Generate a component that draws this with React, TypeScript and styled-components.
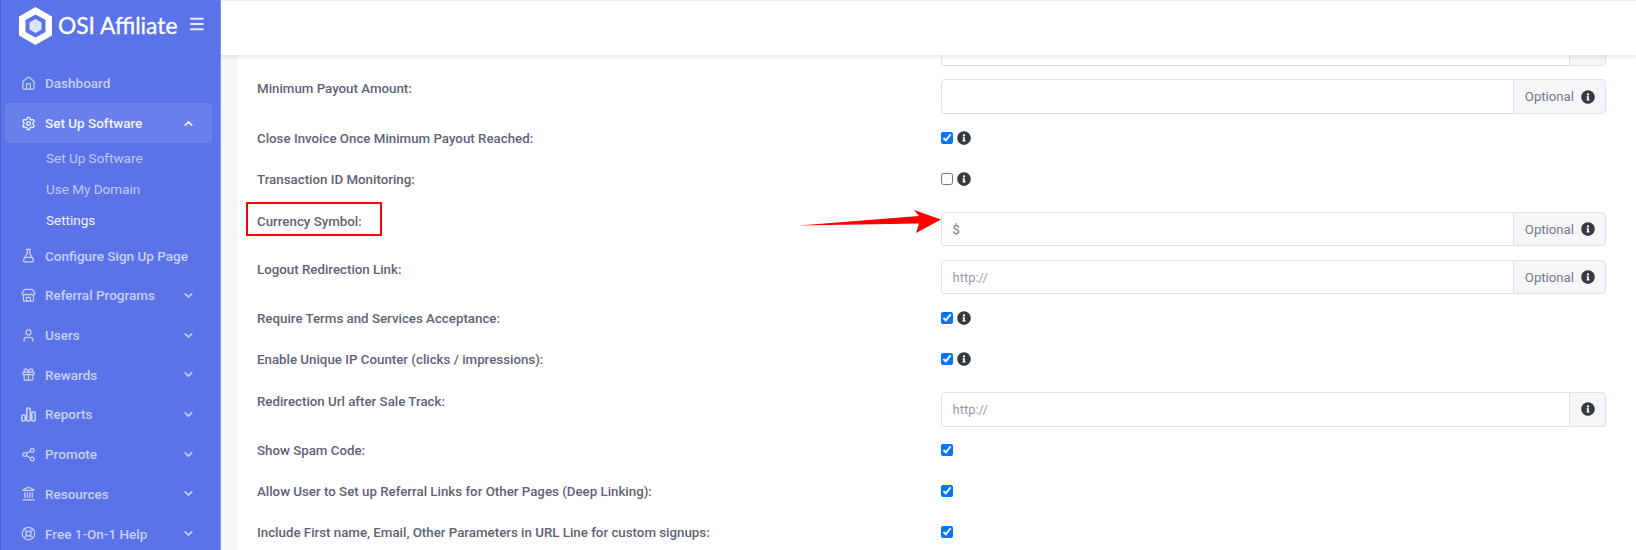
import React from "react";
import styled, { createGlobalStyle } from "styled-components";
import {
  House, Settings, FlaskConical, Store, User, Gift, Share2, Landmark, LifeBuoy, ChevronDown, ChevronUp, Menu,
} from "lucide-react";
import { FaInfoCircle } from "react-icons/fa";

const FONT = `"Roboto", "Liberation Sans", sans-serif`;

const Global = createGlobalStyle`
  html, body { margin: 0; padding: 0; height: 550px; overflow: hidden; background: #fff; }
  * { box-sizing: border-box; }
  #root { height: 550px; }
`;

const Page = styled.div`
  display: flex;
  width: 1636px;
  height: 550px;
  font-family: ${FONT};
  font-size: 13.5px;
  background: #f5f6f8;
  overflow: hidden;
`;

const Sidebar = styled.aside`
  flex: 0 0 221px;
  display: flex;
  flex-direction: column;
  overflow: hidden;
  background: #5a73e8;
  border-left: 1px solid #4c62c8;
  border-right: 1px solid #8597ee;
`;

const Brand = styled.div`
  flex: none;
  height: 63.5px;
  display: flex;
  align-items: flex-start;
  padding: 7px 0 0 17px;
  color: #fff;
`;

const BrandName = styled.span`
  font-family: "Lato", sans-serif;
  font-size: 22.8px;
  line-height: 37px;
  margin-left: 5px;
  width: 133px;
  white-space: nowrap;
  -webkit-text-stroke: 0.3px #fff;
`;

const Burger = styled.span`
  display: flex;
  margin: 8px 0 0 -3px;
  color: #e3e8fc;
`;

const Nav = styled.nav`
  flex: none;
  display: flex;
  flex-direction: column;
`;

const NavItem = styled.div<{ $active?: boolean }>`
  flex: none;
  height: 39.7px;
  margin-left: ${(p) => (p.$active ? "3.5px" : "0")};
  margin-right: ${(p) => (p.$active ? "8.5px" : "0")};
  padding-left: ${(p) => (p.$active ? "16.5px" : "20px")};
  padding-right: ${(p) => (p.$active ? "17px" : "25.5px")};
  display: flex;
  align-items: center;
  gap: 9px;
  border-radius: 3px;
  font-weight: 500;
  color: ${(p) => (p.$active ? "#f3f5fe" : "#c7d0f8")};
  background: ${(p) => (p.$active ? "#6980ea" : "transparent")};
`;

const NavIcon = styled.span`
  display: flex;
  width: 15px;
  justify-content: center;
`;

const NavText = styled.span`
  flex: 1;
  white-space: nowrap;
`;

const SubNav = styled.div`
  display: flex;
  flex-direction: column;
`;

const SubItem = styled.div<{ $active?: boolean }>`
  height: 31px;
  line-height: 31px;
  padding-left: 45px;
  font-size: 13.5px;
  color: ${(p) => (p.$active ? "#f3f5fe" : "#c0caf6")};
`;

const Main = styled.main`
  flex: 1;
  display: flex;
  flex-direction: column;
  min-width: 0;
`;

const Topbar = styled.header`
  flex: 0 0 55px;
  position: relative;
  z-index: 2;
  background: #fff;
  border-top: 1px solid #ececec;
  box-shadow: 0 2px 4px rgba(15, 34, 58, 0.1);
`;

const Content = styled.div`
  flex: 1;
  min-height: 0;
  overflow: hidden;
  padding-left: 17px;
`;

const Card = styled.section`
  height: 100%;
  background: #fff;
  padding: 0 30px 0 19px;
  overflow: hidden;
`;

const Form = styled.div`
  margin-top: -23.7px;
  display: flex;
  flex-direction: column;
  gap: 13.4px;
`;

const Row = styled.div<{ $check?: boolean; $extra?: number }>`
  flex: none;
  position: relative;
  display: grid;
  grid-template-columns: 683.5px 1fr;
  height: ${(p) => (p.$check ? "27.6px" : "34.6px")};
  margin-top: ${(p) => p.$extra ?? 0}px;
`;

const Label = styled.label<{ $check?: boolean }>`
  padding-top: ${(p) => (p.$check ? "1.2px" : "0")};
  line-height: 19.5px;
  font-size: 13.3px;
  font-weight: 500;
  color: #5f6377;
  white-space: nowrap;
`;

const InputGroup = styled.div`
  display: flex;
  height: 34.6px;
`;

const TextInput = styled.input`
  flex: 1;
  min-width: 0;
  height: 100%;
  padding: 0 11px;
  border: 1px solid #dfe1e9;
  border-radius: 4px 0 0 4px;
  background: #fff;
  font-family: ${FONT};
  font-size: 13px;
  color: #74788d;
  outline: none;
  &::placeholder { color: #969aaa; opacity: 1; }
`;

const Addon = styled.span`
  display: flex;
  align-items: center;
  justify-content: center;
  gap: 7px;
  min-width: 37px;
  height: 100%;
  padding: 0 10px 0 11px;
  margin-left: -1px;
  border: 1px solid #dfe1e9;
  border-radius: 0 4px 4px 0;
  background: #f5f6f8;
  font-size: 13.2px;
  color: #74788d;
`;

const CheckLine = styled.div`
  display: flex;
  align-items: center;
  gap: 4px;
  height: 20px;
`;

const Check = styled.input.attrs({ type: "checkbox" })`
  width: 12px;
  height: 12px;
  margin: 0;
`;

const Info = styled(FaInfoCircle)`
  color: #343a40;
  font-size: 14px;
  flex: none;
`;

const RedBox = styled.span`
  position: absolute;
  left: -11px;
  top: -9.7px;
  width: 136px;
  height: 33.7px;
  border: 2px solid #f00;
`;

const Arrow = styled.svg`
  position: absolute;
  left: 542px;
  top: -3px;
  width: 142px;
  height: 26px;
`;

const Logo = () => (
  <svg width="35" height="38" viewBox="0 0 35 38">
    <polygon points="17.5,0 34,9.5 34,28.5 17.5,38 1,28.5 1,9.5" fill="#fff" />
    <polygon points="17.5,7.5 27.5,13 27.5,25 17.5,30.5 7.5,25 7.5,13" fill="#5a73e8" />
    <polygon points="17.5,12 23.5,15.5 23.5,22.5 17.5,26 11.5,22.5 11.5,15.5" fill="#dfe4fb" />
  </svg>
);

const Bars = () => (
  <svg width="15" height="15" viewBox="0 0 15 15" fill="none" stroke="currentColor" strokeWidth="1.6">
    <rect x="0.8" y="8" width="3.4" height="6" rx="1" />
    <rect x="5.8" y="1" width="3.4" height="13" rx="1" />
    <rect x="10.8" y="5" width="3.4" height="9" rx="1" />
  </svg>
);

const iconProps = { size: 15, strokeWidth: 2 };

const items: { label: string; icon: React.ReactNode }[] = [
  { label: "Referral Programs", icon: <Store {...iconProps} /> },
  { label: "Users", icon: <User {...iconProps} /> },
  { label: "Rewards", icon: <Gift {...iconProps} /> },
  { label: "Reports", icon: <Bars /> },
  { label: "Promote", icon: <Share2 {...iconProps} /> },
  { label: "Resources", icon: <Landmark {...iconProps} /> },
  { label: "Free 1-On-1 Help", icon: <LifeBuoy {...iconProps} /> },
];

const OptionalAddon = () => (
  <Addon>
    Optional <Info />
  </Addon>
);

const CheckRow = ({ label, checked, info, extra }: { label: string; checked?: boolean; info?: boolean; extra?: number }) => (
  <Row $check $extra={extra}>
    <Label $check>{label}</Label>
    <CheckLine>
      <Check defaultChecked={checked} />
      {info && <Info />}
    </CheckLine>
  </Row>
);

export default function App() {
  return (
    <Page>
      <Global />
      <Sidebar>
        <Brand>
          <Logo />
          <BrandName>OSI Affiliate</BrandName>
          <Burger>
            <Menu size={18} strokeWidth={2.4} />
          </Burger>
        </Brand>
        <Nav>
          <NavItem>
            <NavIcon><House {...iconProps} /></NavIcon>
            <NavText>Dashboard</NavText>
          </NavItem>
          <NavItem $active>
            <NavIcon><Settings {...iconProps} /></NavIcon>
            <NavText>Set Up Software</NavText>
            <ChevronUp size={13} strokeWidth={2.8} />
          </NavItem>
          <SubNav>
            <SubItem>Set Up Software</SubItem>
            <SubItem>Use My Domain</SubItem>
            <SubItem $active>Settings</SubItem>
          </SubNav>
          <NavItem>
            <NavIcon><FlaskConical {...iconProps} /></NavIcon>
            <NavText>Configure Sign Up Page</NavText>
          </NavItem>
          {items.map((it) => (
            <NavItem key={it.label}>
              <NavIcon>{it.icon}</NavIcon>
              <NavText>{it.label}</NavText>
              <ChevronDown size={13} strokeWidth={2.8} />
            </NavItem>
          ))}
        </Nav>
      </Sidebar>
      <Main>
        <Topbar />
        <Content>
          <Card>
            <Form>
              <Row>
                <span />
                <InputGroup>
                  <TextInput />
                  <Addon />
                </InputGroup>
              </Row>
              <Row>
                <Label>Minimum Payout Amount:</Label>
                <InputGroup>
                  <TextInput />
                  <OptionalAddon />
                </InputGroup>
              </Row>
              <CheckRow label="Close Invoice Once Minimum Payout Reached:" checked info extra={0.7} />
              <CheckRow label="Transaction ID Monitoring:" info />
              <Row $extra={1.8}>
                <Label>Currency Symbol:</Label>
                <InputGroup>
                  <TextInput defaultValue="$" />
                  <OptionalAddon />
                </InputGroup>
                <RedBox />
                <Arrow viewBox="0 0 142 26">
                  <polygon points="0,16.5 120,7 115,1 142,10.5 117,24 120,14.5" fill="#f00" />
                </Arrow>
              </Row>
              <Row>
                <Label>Logout Redirection Link:</Label>
                <InputGroup>
                  <TextInput placeholder="http://" />
                  <OptionalAddon />
                </InputGroup>
              </Row>
              <CheckRow label="Require Terms and Services Acceptance:" checked info />
              <CheckRow label="Enable Unique IP Counter (clicks / impressions):" checked info />
              <Row $extra={2.5}>
                <Label>Redirection Url after Sale Track:</Label>
                <InputGroup>
                  <TextInput placeholder="http://" />
                  <Addon><Info /></Addon>
                </InputGroup>
              </Row>
              <CheckRow label="Show Spam Code:" checked />
              <CheckRow label="Allow User to Set up Referral Links for Other Pages (Deep Linking):" checked />
              <CheckRow label="Include First name, Email, Other Parameters in URL Line for custom signups:" checked />
            </Form>
          </Card>
        </Content>
      </Main>
    </Page>
  );
}
